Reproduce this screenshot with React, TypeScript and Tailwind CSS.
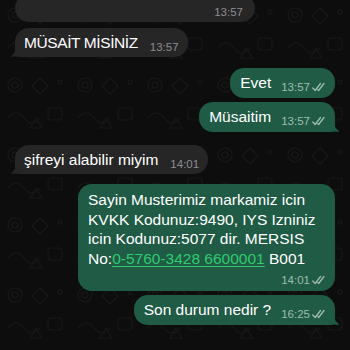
import React from "react";

const font = { fontFamily: '"Liberation Sans", Arial, sans-serif' };

function Ticks() {
  return (
    <svg width="13" height="10" viewBox="0 0 13 10" fill="none" stroke="#9fbdb1" strokeWidth="1.3" strokeLinecap="round" strokeLinejoin="round">
      <path d="M0.8 6 L3.2 8.5 L8.5 1.5" />
      <path d="M5.8 7.6 L6.6 8.5 L12 1.5" />
    </svg>
  );
}

function TailRight({ color }: { color: string }) {
  return (
    <svg className="absolute bottom-0 right-[-5px]" width="12" height="16" viewBox="0 0 12 16">
      <path d="M0 0 L5 0 C5 8 7 12.5 11.5 15.5 C7.5 16.3 3 15.5 0 13 Z" fill={color} />
    </svg>
  );
}

function TailLeft({ color }: { color: string }) {
  return (
    <svg className="absolute bottom-0 left-[-5px]" width="12" height="16" viewBox="0 0 12 16">
      <path d="M12 0 L7 0 C7 8 5 12.5 0.5 15.5 C4.5 16.3 9 15.5 12 13 Z" fill={color} />
    </svg>
  );
}

const IN = "#262627";
const OUT = "#1f5b45";

function Incoming({ text, time, tail, mt, tight }: { text: string; time: string; tail?: boolean; mt: string; tight?: boolean }) {
  return (
    <div className={`relative self-start ${mt}`}>
      <div className={`flex h-[29px] items-center rounded-[14px] bg-[#262627] pl-[9px] pr-[9px] ${tail ? "rounded-bl-[4px]" : ""}`}>
        <span className={`text-[15.5px] leading-[20px] text-white whitespace-nowrap ${tight ? "tracking-[-0.4px]" : ""}`}>{text}</span>
        <span className="ml-[12px] mt-[8px] text-[11.5px] leading-[14px] text-[#8d8d92]">{time}</span>
      </div>
      {tail && <TailLeft color={IN} />}
    </div>
  );
}

function Outgoing({ text, time, tail, mt }: { text: string; time: string; tail?: boolean; mt: string }) {
  return (
    <div className={`relative self-end ${mt}`}>
      <div className={`flex h-[30px] items-center rounded-[14px] bg-[#1f5b45] pl-[10px] pr-[10px] ${tail ? "rounded-br-[4px]" : ""}`}>
        <span className="text-[15.5px] leading-[20px] text-white whitespace-nowrap">{text}</span>
        <span className="ml-[10px] mt-[8px] flex items-center gap-[2px]">
          <span className="text-[11.5px] leading-[14px] text-[#9fbdb1]">{time}</span>
          <Ticks />
        </span>
      </div>
      {tail && <TailRight color={OUT} />}
    </div>
  );
}

function Pattern() {
  return (
    <svg className="absolute inset-0" width="350" height="350" viewBox="0 0 350 350">
      <defs>
        <pattern id="doodle" width="70" height="70" patternUnits="userSpaceOnUse">
          <g fill="none" stroke="#171717" strokeWidth="1.1">
            <circle cx="15" cy="15" r="7" />
            <circle cx="15" cy="15" r="3" />
            <path d="M40 8 l8 8 l-8 8 l-8 -8 z" />
            <rect x="48" y="38" width="14" height="12" rx="3" />
            <path d="M8 48 q8 -10 16 0 t16 0" />
            <circle cx="60" cy="12" r="2" />
            <path d="M30 58 l6 -10 l6 10 z" />
          </g>
        </pattern>
      </defs>
      <rect width="350" height="350" fill="url(#doodle)" />
    </svg>
  );
}

export default function App() {
  return (
    <div className="relative h-[350px] w-[350px] overflow-hidden bg-[#0d0d0d]" style={font}>
      <Pattern />
      <div className="relative flex flex-col px-[15px]">
        <div className="-mt-[6px] flex h-[28px] w-[240px] items-end justify-end self-start rounded-[14px] bg-[#262627] pb-[3px] pr-[12px]">
          <span className="text-[11.5px] leading-[14px] text-[#8d8d92]">13:57</span>
        </div>

        <Incoming mt="mt-[6px]" text="MÜSAİT MİSİNİZ" time="13:57" tail tight />

        <Outgoing mt="mt-[11px]" text="Evet" time="13:57" />
        <Outgoing mt="mt-[4px]" text="Müsaitim" time="13:57" tail />

        <Incoming mt="mt-[13px]" text="şifreyi alabilir miyim" time="14:01" tail />

        <div className="relative mt-[10px] self-end">
          <div className="w-[257px] rounded-[14px] bg-[#1f5b45] pl-[10px] pr-[10px] pt-[6px] pb-[4px]">
            <div className="text-[15.5px] leading-[19.5px] text-white whitespace-nowrap">
              <div>Sayin Musterimiz markamiz icin</div>
              <div>KVKK Kodunuz:9490, IYS Izniniz</div>
              <div>icin Kodunuz:5077 dir. MERSIS</div>
              <div>
                No:<span className="text-[#2fcb6e] underline underline-offset-[2px]">0-5760-3428 6600001</span> B001
              </div>
            </div>
            <div className="mt-[5px] flex items-center justify-end gap-[2px]">
              <span className="text-[11.5px] leading-[14px] text-[#9fbdb1]">14:01</span>
              <Ticks />
            </div>
          </div>
        </div>

        <Outgoing mt="mt-[4px]" text="Son durum nedir ?" time="16:25" tail />
      </div>
    </div>
  );
}
